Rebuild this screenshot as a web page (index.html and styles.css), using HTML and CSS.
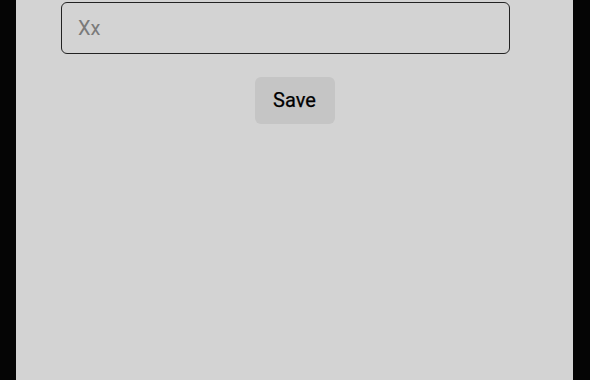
FILE: index.html
```html
<!DOCTYPE html>
<html lang="en">
<head>
    <meta charset="UTF-8">
    <title>Edit</title>
    <link rel="stylesheet" href="styles.css">
</head>
<body>
    <div class="panel">
        <form class="form">
            <input class="field" type="text" placeholder="Xx">
            <button class="save" type="button">Save</button>
        </form>
    </div>
</body>
</html>
```

FILE: styles.css
```css
* {
    margin: 0;
    padding: 0;
    box-sizing: border-box;
}

html,
body {
    height: 100%;
}

body {
    background: #050505;
    font-family: Roboto, "Liberation Sans", sans-serif;
    padding: 0 17px 0 16px;
}

.panel {
    background: #d3d3d3;
    height: 100%;
    padding: 2px 63px 0 45px;
}

.form {
    display: flex;
    flex-direction: column;
    align-items: center;
}

.field {
    width: 100%;
    height: 52px;
    border: 1.5px solid #222;
    border-radius: 6px;
    background: transparent;
    padding: 0 16px;
    font-family: Roboto, "Liberation Sans", sans-serif;
    font-size: 20px;
    font-weight: 400;
    color: #222;
    outline: none;
}

.field::placeholder {
    color: #7a7a7a;
}

.save {
    margin-top: 23px;
    margin-left: 18px;
    width: 80px;
    height: 47px;
    padding-bottom: 1px;
    border: none;
    border-radius: 6px;
    background: #c5c5c5;
    font-family: Roboto, "Liberation Sans", sans-serif;
    font-size: 20px;
    font-weight: 400;
    -webkit-text-stroke: 0.25px #000;
    color: #000;
}
```
